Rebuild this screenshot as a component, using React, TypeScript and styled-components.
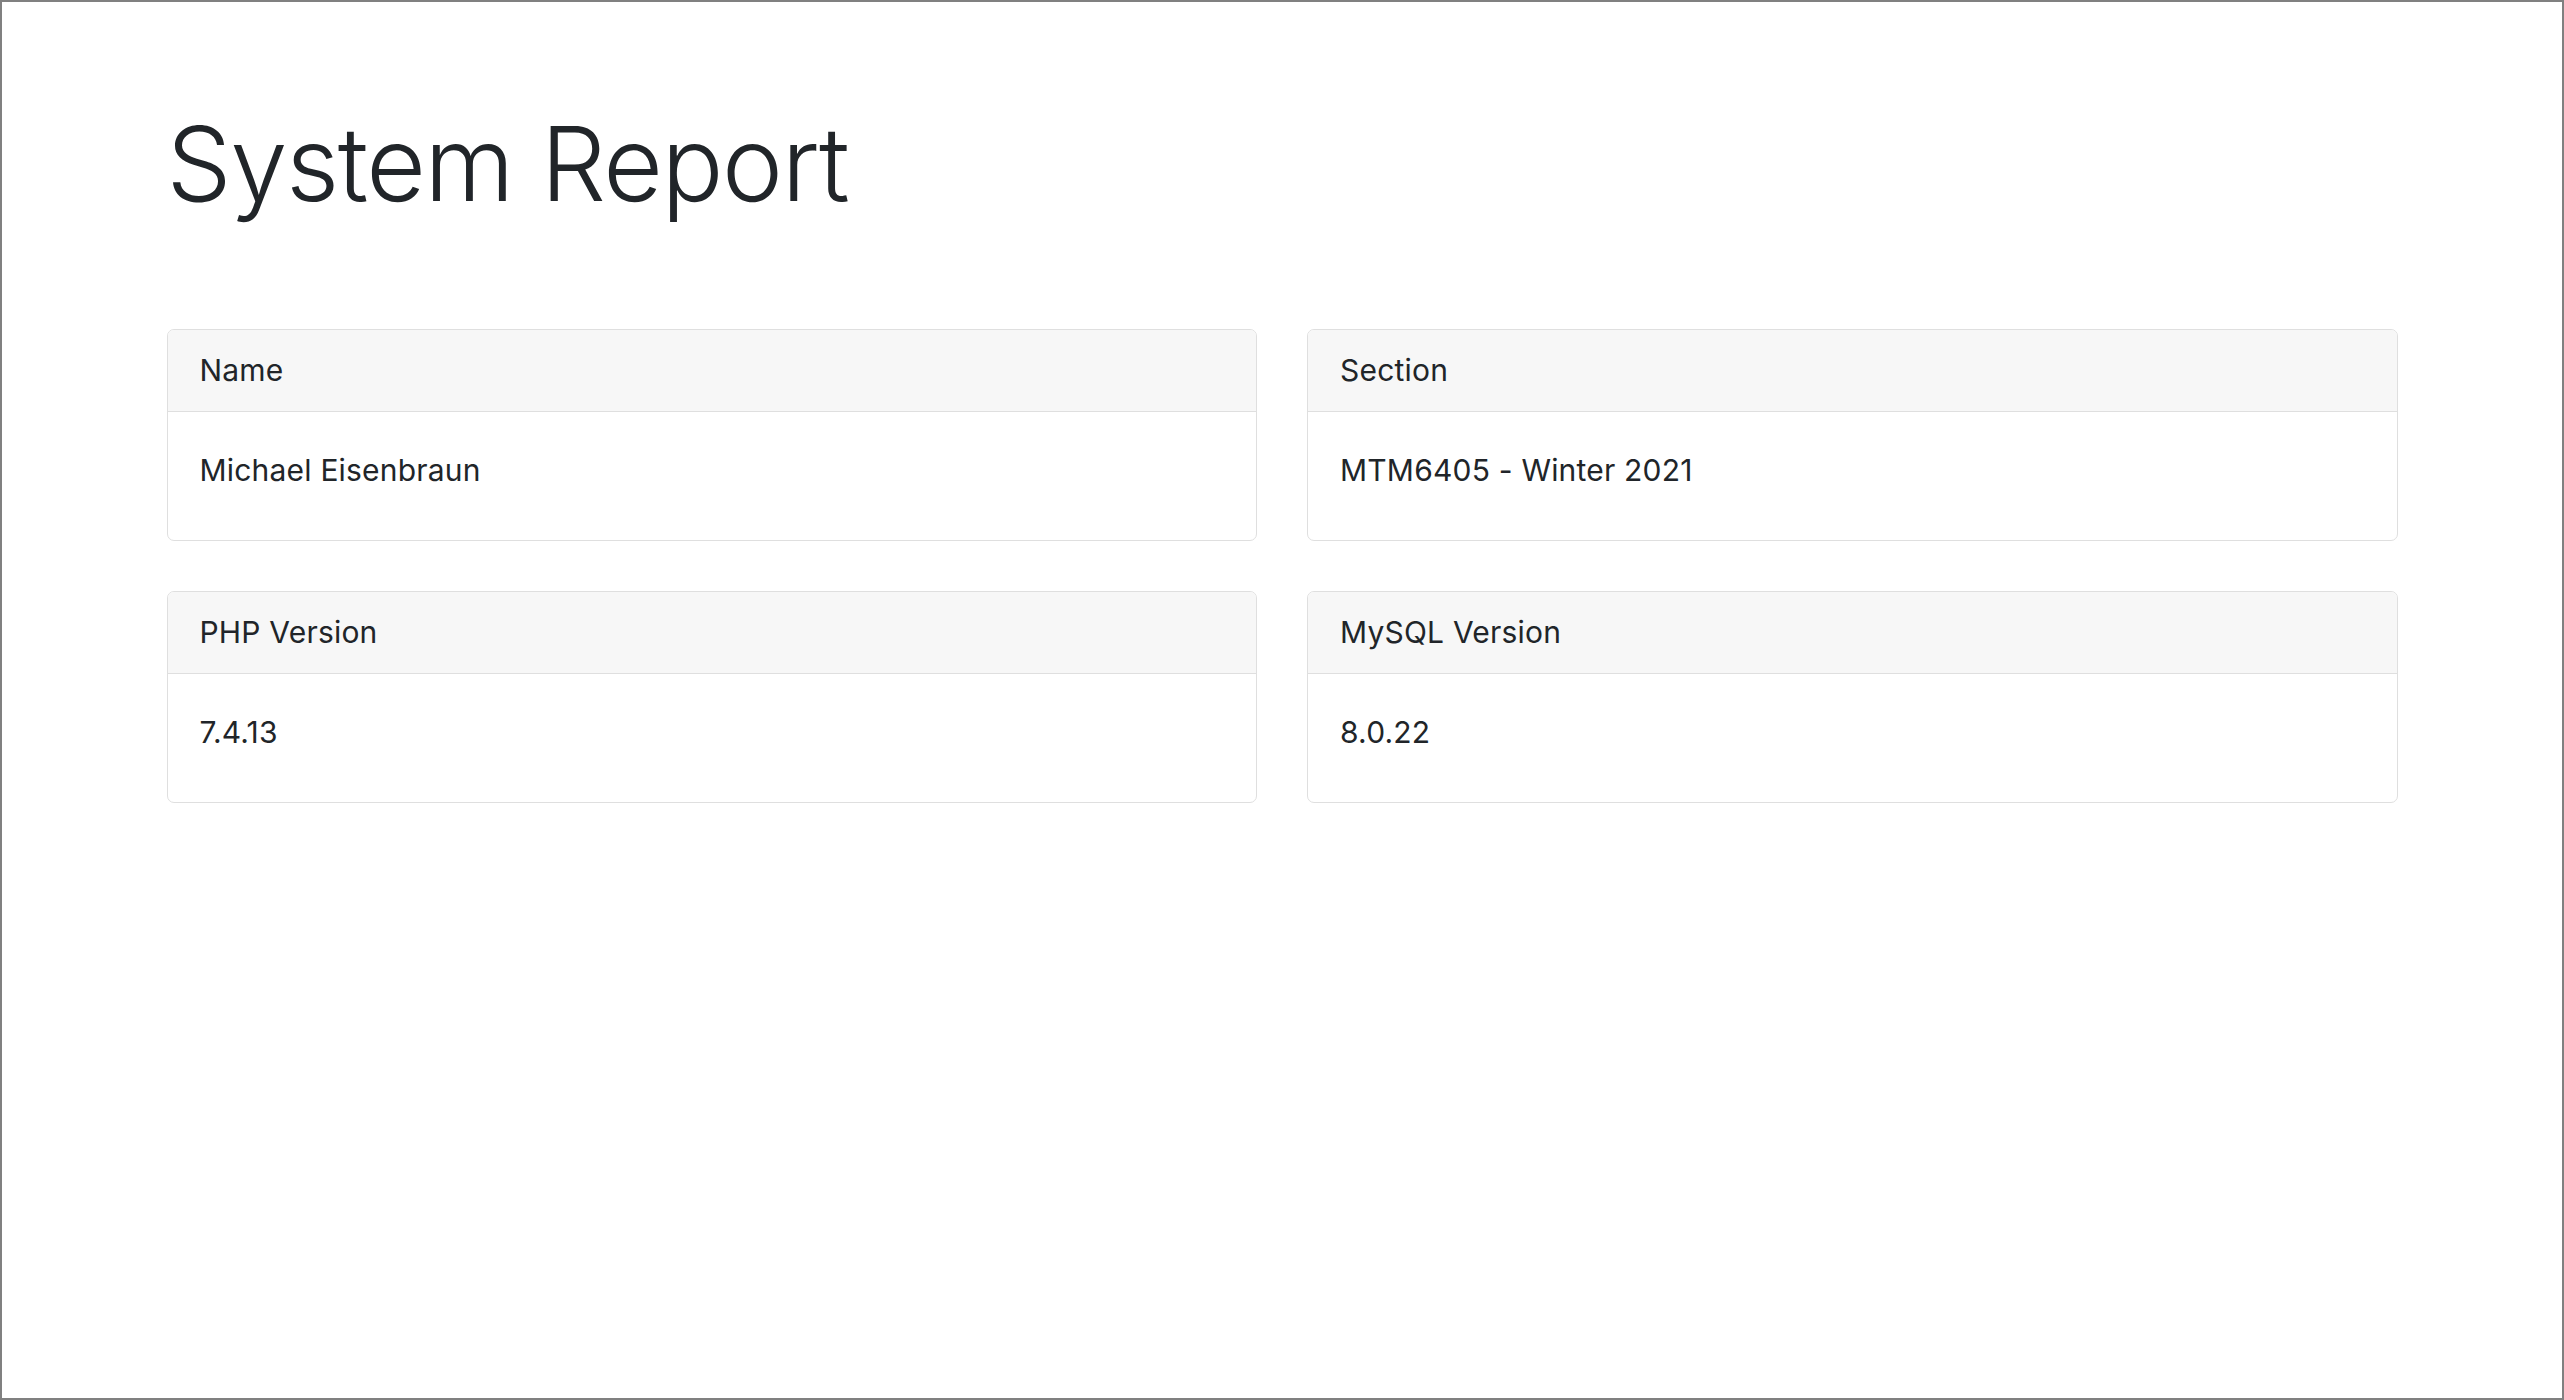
import React from "react";
import styled, { createGlobalStyle } from "styled-components";

const GlobalStyle = createGlobalStyle`
  html, body {
    margin: 0;
    padding: 0;
    background: #ffffff;
  }
  * { box-sizing: border-box; }
`;

const Frame = styled.div`
  width: 2564px;
  height: 1400px;
  border: 2px solid #808080;
  background: #ffffff;
  font-family: Inter, "Noto Sans", "Liberation Sans", sans-serif;
  color: #212529;
  overflow: hidden;
`;

const Container = styled.main`
  width: 2231px;
  margin: 0 auto;
  padding-top: 100px;
`;

const Title = styled.h1`
  margin: 0 0 103px 0;
  font-size: 103px;
  line-height: 1.2;
  font-weight: 300;
  letter-spacing: -1.4px;
`;

const Grid = styled.section`
  display: grid;
  grid-template-columns: 1fr 1fr;
  column-gap: 50px;
  row-gap: 50px;
`;

const Card = styled.div`
  border: 1px solid #dfdfdf;
  border-radius: 7px;
  overflow: hidden;
  background: #ffffff;
`;

const CardHeader = styled.div`
  background: #f7f7f7;
  border-bottom: 1px solid #dfdfdf;
  padding: 18px 32px;
  font-size: 30px;
  line-height: 45px;
  letter-spacing: 0.2px;
`;

const CardBody = styled.div`
  padding: 36px 32px 47px;
  font-size: 30px;
  line-height: 45px;
  letter-spacing: 0.2px;
`;

const items = [
  { label: "Name", value: "Michael Eisenbraun" },
  { label: "Section", value: "MTM6405 - Winter 2021" },
  { label: "PHP Version", value: "7.4.13" },
  { label: "MySQL Version", value: "8.0.22" },
];

export default function App() {
  return (
    <>
      <GlobalStyle />
      <Frame>
        <Container>
          <Title>System Report</Title>
          <Grid>
            {items.map((it) => (
              <Card key={it.label}>
                <CardHeader>{it.label}</CardHeader>
                <CardBody>{it.value}</CardBody>
              </Card>
            ))}
          </Grid>
        </Container>
      </Frame>
    </>
  );
}
